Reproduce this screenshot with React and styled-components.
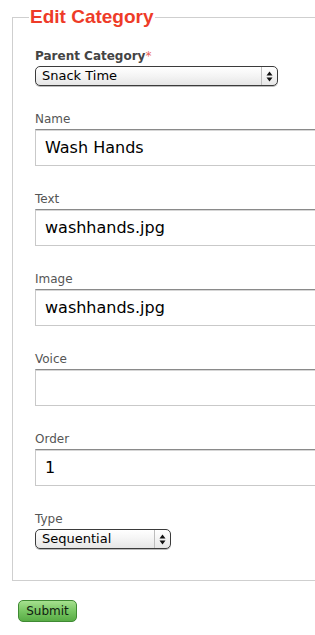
import React from "react";
import styled, { createGlobalStyle } from "styled-components";

const Global = createGlobalStyle`
  html, body { margin: 0; padding: 0; background: #fff; }
  body { font-family: "DejaVu Sans", "Lucida Grande", Verdana, sans-serif; overflow: hidden; }
`;

const Page = styled.div`
  padding: 6px 0 14px 12px;
  overflow: hidden;
`;

const Fieldset = styled.fieldset`
  margin: 0;
  width: 420px;
  border: 1px solid #cfcfcf;
  padding: 20px 0 31px 22px;
  display: flex;
  flex-direction: column;
  gap: 25px;
  box-sizing: border-box;
`;

const Legend = styled.legend`
  margin-left: -6px;
  padding: 0 1px;
  color: #ee3b28;
  font-family: "Liberation Sans", Arial, sans-serif;
  font-size: 19px;
  font-weight: bold;
  line-height: 22px;
`;

const Field = styled.div`
  display: flex;
  flex-direction: column;
  align-items: flex-start;
`;

const Label = styled.label`
  display: block;
  font-size: 12px;
  line-height: 16px;
  margin-bottom: 2px;
  color: ${(p) => (p.$strong ? "#444" : "#555")};
  font-weight: ${(p) => (p.$strong ? "bold" : "normal")};
`;

const Required = styled.span`
  color: #e8635a;
  font-weight: normal;
`;

const TextInput = styled.input`
  box-sizing: border-box;
  width: 330px;
  height: 37px;
  margin: 0;
  padding: 0 9px;
  border: 1px solid #c9c9c9;
  border-top: 1px solid #8a8a8a;
  box-shadow: inset 0 1px 0 #d6d6d6;
  font-family: "DejaVu Sans", "Lucida Grande", sans-serif;
  font-size: 16px;
  color: #000;
  background: #fff;
  outline: none;
`;

const SelectBox = styled.div`
  box-sizing: border-box;
  display: flex;
  align-items: stretch;
  width: ${(p) => p.$width}px;
  height: 20px;
  border: 1px solid #3b3b3b;
  border-radius: 5px;
  background: linear-gradient(#ffffff, #f4f4f4 50%, #e6e6e6);
  box-shadow: 0 1px 0 #bbb;
  overflow: hidden;
`;

const NativeSelect = styled.select`
  appearance: none;
  -webkit-appearance: none;
  flex: 1;
  border: none;
  background: transparent;
  margin: 0;
  padding: 0 0 0 6px;
  font-family: "DejaVu Sans", "Lucida Grande", sans-serif;
  font-size: 13px;
  line-height: 18px;
  color: #000;
  outline: none;
`;

const ArrowCell = styled.span`
  width: 15px;
  border-left: 1px solid #bdbdbd;
  display: flex;
  align-items: center;
  justify-content: center;
`;

const SubmitButton = styled.button`
  display: block;
  margin: 19px 0 0 6px;
  width: 59px;
  height: 22px;
  padding: 0;
  border: 1px solid #3f8a33;
  border-radius: 5px;
  background: linear-gradient(#a6e08f, #78c663 50%, #58ac45);
  font-family: "DejaVu Sans", "Lucida Grande", sans-serif;
  font-size: 12px;
  color: #102010;
  cursor: pointer;
`;

const Arrows = () => (
  <svg width="7" height="11" viewBox="0 0 7 11">
    <path d="M3.5 0.5 L6.5 4.5 L0.5 4.5 Z" fill="#111" />
    <path d="M3.5 10.5 L6.5 6.5 L0.5 6.5 Z" fill="#111" />
  </svg>
);

const Select = ({ width, value }) => (
  <SelectBox $width={width}>
    <NativeSelect defaultValue={value}>
      <option>{value}</option>
    </NativeSelect>
    <ArrowCell>
      <Arrows />
    </ArrowCell>
  </SelectBox>
);

const TextField = ({ label, value }) => (
  <Field>
    <Label>{label}</Label>
    <TextInput defaultValue={value} />
  </Field>
);

export default function App() {
  return (
    <>
      <Global />
      <Page>
        <Fieldset>
          <Legend>Edit Category</Legend>
          <Field>
            <Label $strong>
              Parent Category<Required>*</Required>
            </Label>
            <Select width={243} value="Snack Time" />
          </Field>
          <TextField label="Name" value="Wash Hands" />
          <TextField label="Text" value="washhands.jpg" />
          <TextField label="Image" value="washhands.jpg" />
          <TextField label="Voice" value="" />
          <TextField label="Order" value="1" />
          <Field>
            <Label>Type</Label>
            <Select width={136} value="Sequential" />
          </Field>
        </Fieldset>
        <SubmitButton type="button">Submit</SubmitButton>
      </Page>
    </>
  );
}
